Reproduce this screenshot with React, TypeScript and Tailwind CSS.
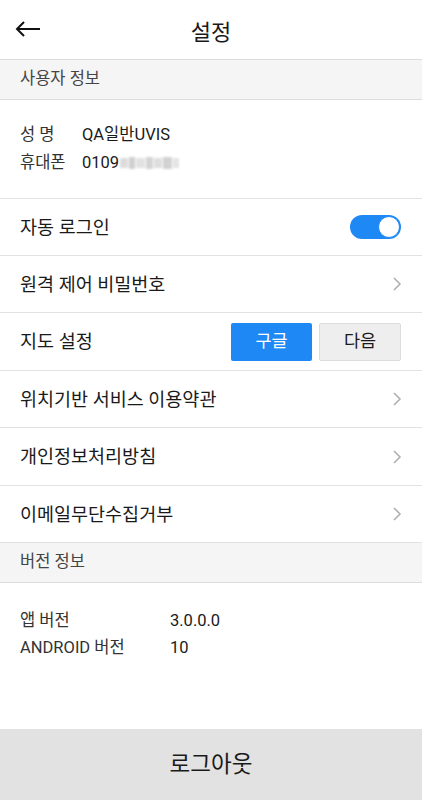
import React from "react";

const font = { fontFamily: 'Roboto, "Noto Sans CJK KR", "Noto Sans", sans-serif' };

function Chevron() {
  return (
    <svg width="10" height="16" viewBox="0 0 10 16" className="mr-[20px]">
      <path d="M2 2 L8 8 L2 14" fill="none" stroke="#b0b0b0" strokeWidth="1.6" />
    </svg>
  );
}

function Row({ label, h, right }: { label: string; h: string; right?: React.ReactNode }) {
  return (
    <div className={`flex items-center justify-between border-b border-[#e2e2e2] pl-[20px] ${h}`}>
      <span className="pt-[3px] text-[18.5px] text-[#1a1a1a]">{label}</span>
      {right ?? <Chevron />}
    </div>
  );
}

export default function App() {
  return (
    <div style={font} className="flex h-[800px] w-[422px] flex-col bg-white">
      <div className="relative flex h-[60px] shrink-0 items-center justify-center border-b border-[#dddddd]">
        <svg width="28" height="18" viewBox="0 0 28 18" className="absolute left-[14px] top-[20px]">
          <path d="M26 9 H3 M10 2 L3 9 L10 16" fill="none" stroke="#111" strokeWidth="2" />
        </svg>
        <span className="mt-[6px] text-[22px] text-[#1a1a1a]">설정</span>
      </div>
      <div className="flex h-[40px] shrink-0 items-center border-b border-[#dddddd] bg-[#f5f5f5] pl-[20px] text-[16.5px] text-[#444]">
        사용자 정보
      </div>
      <div className="flex h-[99px] shrink-0 flex-col border-b border-[#e2e2e2] pl-[20px] pt-[21px] text-[16.5px] leading-[28px] text-[#333]">
        <div className="flex">
          <span className="w-[62px]">성 명</span>
          <span className="text-[#1a1a1a]">QA일반UVIS</span>
        </div>
        <div className="flex">
          <span className="w-[62px]">휴대폰</span>
          <span className="text-[#1a1a1a]">0109</span>
          <span className="ml-[1px] flex items-center gap-[1px] blur-[0.8px]">
            <span className="h-[10px] w-[8px] bg-[#dcdcdc]" />
            <span className="h-[12px] w-[6px] bg-[#cfcfcf]" />
            <span className="h-[10px] w-[9px] bg-[#e2e2e2]" />
            <span className="h-[12px] w-[7px] bg-[#d4d4d4]" />
            <span className="h-[10px] w-[8px] bg-[#dedede]" />
            <span className="h-[12px] w-[9px] bg-[#d2d2d2]" />
            <span className="h-[10px] w-[6px] bg-[#e4e4e4]" />
          </span>
        </div>
      </div>
      <Row
        label="자동 로그인"
        h="h-[57px]"
        right={
          <div className="mr-[21px] flex h-[24px] w-[51px] items-center justify-end rounded-full bg-[#1e88f5] pr-[1px]">
            <div className="h-[22px] w-[22px] rounded-full border-[1.5px] border-[#1e88f5] bg-white" />
          </div>
        }
      />
      <Row label="원격 제어 비밀번호" h="h-[57px]" />
      <Row
        label="지도 설정"
        h="h-[58px]"
        right={
          <div className="mr-[21px] flex gap-[7px]">
            <div className="flex h-[38px] w-[81px] items-center justify-center rounded-[2px] bg-[#1e88f5] text-[17.5px] text-white">
              구글
            </div>
            <div className="flex h-[38px] w-[82px] items-center justify-center rounded-[2px] border border-[#dcdcdc] bg-[#eeeeee] text-[17.5px] text-[#1a1a1a]">
              다음
            </div>
          </div>
        }
      />
      <Row label="위치기반 서비스 이용약관" h="h-[57px]" />
      <Row label="개인정보처리방침" h="h-[58px]" />
      <Row label="이메일무단수집거부" h="h-[57px]" />
      <div className="flex h-[40px] shrink-0 items-center border-b border-[#dddddd] bg-[#f5f5f5] pl-[20px] text-[16.5px] text-[#444]">
        버전 정보
      </div>
      <div className="flex flex-1 flex-col pl-[20px] pt-[24px] text-[16.5px] leading-[27px] text-[#333]">
        <div className="flex">
          <span className="w-[150px]">앱 버전</span>
          <span className="text-[#1a1a1a]">3.0.0.0</span>
        </div>
        <div className="flex">
          <span className="w-[150px]">ANDROID 버전</span>
          <span className="text-[#1a1a1a]">10</span>
        </div>
      </div>
      <div className="flex h-[71px] shrink-0 items-center justify-center bg-[#e2e2e2] text-[22.5px] text-[#1a1a1a]">
        로그아웃
      </div>
    </div>
  );
}
